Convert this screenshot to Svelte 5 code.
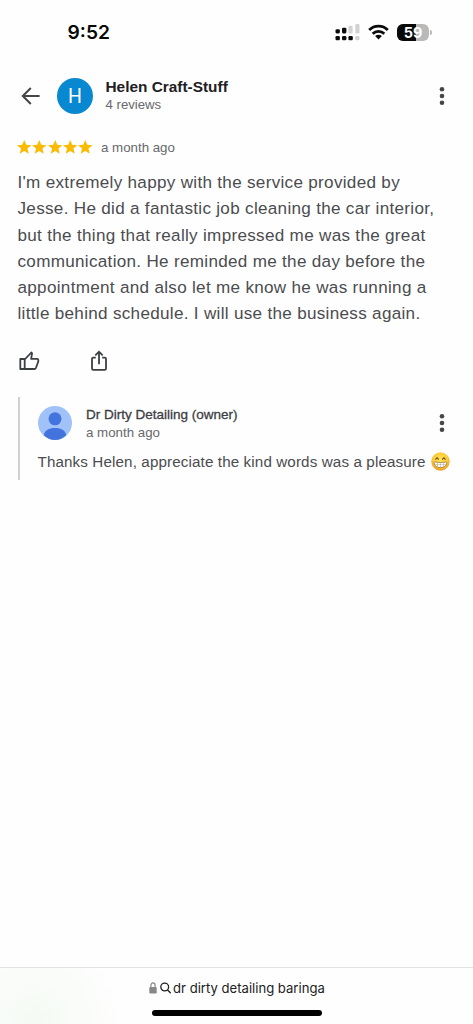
<script lang="ts">
	const time = '9:52';
	const battery = 59;
	const review = {
		author: 'Helen Craft-Stuff',
		count: '4 reviews',
		date: 'a month ago',
		stars: 5,
		lines: [
			"I'm extremely happy with the service provided by",
			'Jesse. He did a fantastic job cleaning the car interior,',
			'but the thing that really impressed me was the great',
			'communication. He reminded me the day before the',
			'appointment and also let me know he was running a',
			'little behind schedule. I will use the business again.'
		]
	};
	const reply = {
		author: 'Dr Dirty Detailing (owner)',
		date: 'a month ago',
		text: 'Thanks Helen, appreciate the kind words was a pleasure'
	};
	const query = 'dr dirty detailing baringa';
</script>

{#snippet dots()}
	<button class="more" aria-label="More">
		<svg width="6" height="20" viewBox="0 0 6 20" fill="#444649">
			<circle cx="3" cy="3.3" r="2.3" />
			<circle cx="3" cy="10" r="2.3" />
			<circle cx="3" cy="16.7" r="2.3" />
		</svg>
	</button>
{/snippet}

<div class="screen">
	<div class="status">
		<span class="time">{time}</span>
		<div class="indicators">
			<svg class="signal" width="25" height="17" viewBox="0 0 25 17">
				<g fill="#0b0b0b">
					<rect x="0.5" y="5.2" width="4.4" height="4.2" rx="1.3" />
					<rect x="7" y="3.8" width="4.4" height="5.6" rx="1.3" />
					<rect x="0.5" y="12" width="4.4" height="4.2" rx="1.3" />
					<rect x="7" y="12" width="4.4" height="4.2" rx="1.3" />
					<rect x="13.4" y="12" width="4.4" height="4.2" rx="1.3" />
				</g>
				<g fill="#d2d2d2">
					<rect x="13.4" y="1.8" width="4.2" height="7.8" rx="1.3" />
					<rect x="20.3" y="0" width="4.2" height="9.6" rx="1.3" />
					<rect x="20.3" y="12" width="4.2" height="4.2" rx="1.3" />
				</g>
			</svg>
			<svg class="wifi" width="21" height="16" viewBox="0 0 21 16">
				<g fill="none" stroke="#0b0b0b" stroke-width="2.8">
					<path d="M1.2 6A13.2 13.2 0 0 1 19.8 6" />
					<path d="M4.7 9.7A8.2 8.2 0 0 1 16.3 9.7" />
				</g>
				<path d="M7.1 12.1a4.9 4.9 0 0 1 6.8 0L10.5 15.6z" fill="#0b0b0b" />
			</svg>
			<div class="battery">
				<div class="level" style="width: {battery}%"></div>
				<span>{battery}</span>
			</div>
			<i class="cap"></i>
		</div>
	</div>

	<header>
		<svg class="back" width="20" height="18" viewBox="0 0 20 18" fill="none" stroke="#444649" stroke-width="2">
			<path d="M18.6 9H2M9.8 1L1.8 9l8 8" />
		</svg>
		<div class="avatar">H</div>
		<div class="who">
			<strong>{review.author}</strong>
			<span>{review.count}</span>
		</div>
		{@render dots()}
	</header>

	<div class="rating">
		{#each Array(review.stars) as _}
			<svg width="14.5" height="14" viewBox="0 0 24 23" fill="#fabb05">
				<path d="M12 0l3.3 7.8 8.7.7-6.7 5.6 2.1 8.7L12 18.200l-7.4 4.6 2.1-8.700L0 8.500l8.700-.7z" />
			</svg>
		{/each}
		<span>{review.date}</span>
	</div>

	<p class="review">
		{#each review.lines as line}
			<span>{line}</span>
		{/each}
	</p>

	<div class="actions">
		<svg width="21" height="20" viewBox="0 0 21 20" fill="none" stroke="#3c4043" stroke-width="1.8" stroke-linejoin="round">
			<path d="M1.3 8h4.400v10H1.300zM5.700 8.500L12.300 1.500l.8.8-1 5.500h6.200q1 0 1 1.200v1.500L16.900 17q-.4 1-1.500 1h-9.700" />
		</svg>
		<svg width="16" height="22" viewBox="0 0 16 22" fill="none" stroke="#3c4043" stroke-width="1.8">
			<path d="M4.800 7.600H2.300q-1.300 0-1.300 1.300V18.500q0 1.300 1.300 1.300H13.700q1.300 0 1.300-1.300V8.900q0-1.300-1.300-1.300H11.200M8 14.200V2.200M4.300 5.300L8 1.700l3.700 3.600" />
		</svg>
	</div>

	<section class="reply">
		<div class="reply-head">
			<svg class="owner" width="34" height="34" viewBox="0 0 34 34">
				<circle cx="17" cy="17" r="17" fill="#a0c2f9" />
				<circle cx="17" cy="12.8" r="6.5" fill="#4374de" />
				<path d="M5.800 29.200C6.500 24 11 22 17 22s10.500 2 11.200 7.200A17 17 0 0 1 17 34a17 17 0 0 1-11.200-4.800z" fill="#4374de" />
			</svg>
			<div class="who">
				<strong>{reply.author}</strong>
				<span>{reply.date}</span>
			</div>
			{@render dots()}
		</div>
		<div class="reply-text">
			<span>{reply.text}</span>
			<svg width="19" height="19" viewBox="0 0 19 19">
				<defs>
					<radialGradient id="face" cx="50%" cy="40%" r="60%">
						<stop offset="0" stop-color="#ffe45c" />
						<stop offset=".65" stop-color="#fccb3a" />
						<stop offset="1" stop-color="#e79a22" />
					</radialGradient>
				</defs>
				<circle cx="9.5" cy="9.5" r="9.2" fill="url(#face)" />
				<path d="M4.800 7.200q1.200-2.600 2.600 0M11.600 7.200q1.200-2.600 2.600 0" fill="none" stroke="#64401a" stroke-width="1.1" stroke-linecap="round" />
				<path d="M3.800 10q5.700 1 11.400 0 .8 0 .7 1-.9 4.600-6.400 4.600T3.100 11q-.1-1 .7-1z" fill="#fff" stroke="#986326" stroke-width=".7" />
				<path d="M3.500 12.600h12M6.500 10.500v4.300M9.500 10.700v4.700M12.500 10.500v4.300" stroke="#b59b7a" stroke-width=".5" />
			</svg>
		</div>
	</section>

	<footer>
		<div class="address">
			<svg width="8" height="12" viewBox="0 0 8 12">
				<path d="M1.900 5.500V3.300a2.100 2.500 0 0 1 4.200 0v2.200" fill="none" stroke="#87878a" stroke-width="1.2" />
				<rect x=".3" y="5" width="7.4" height="6.5" rx="1.2" fill="#87878a" />
			</svg>
			<svg class="search" width="11" height="12" viewBox="0 0 11 12" fill="none" stroke="#222" stroke-width="1.3" stroke-linecap="round">
				<circle cx="4.7" cy="5" r="3.9" />
				<path d="M7.600 8l2.700 2.800" />
			</svg>
			<span>{query}</span>
		</div>
		<div class="home"></div>
	</footer>
</div>

<style>
	:global(body) {
		margin: 0;
		background: #fefefe;
	}
	.screen {
		width: 473px;
		height: 1024px;
		display: flex;
		flex-direction: column;
		overflow: hidden;
		background: #fefefe;
		color: #4b4c4f;
		font-family: "Liberation Sans", Arial, sans-serif;
		white-space: nowrap;
	}
	.status {
		height: 64px;
		padding: 0 41px 0 67.5px;
		display: flex;
		align-items: center;
		justify-content: space-between;
	}
	.time {
		font: 600 19.2px/24px Inter, sans-serif;
		color: #080808;
	}
	.indicators {
		display: flex;
		align-items: center;
	}
	.wifi {
		margin: 0 8px 0 8px;
	}
	.battery {
		position: relative;
		width: 32px;
		height: 17px;
		border-radius: 6px;
		overflow: hidden;
		background: #b9b9b9;
		display: flex;
		justify-content: center;
	}
	.level {
		position: absolute;
		left: 0;
		top: 0;
		height: 100%;
		background: #090909;
	}
	.battery span {
		position: relative;
		font: 700 14.5px/17px Inter, sans-serif;
		color: #fff;
	}
	.cap {
		width: 2px;
		height: 5px;
		margin-left: 1px;
		border-radius: 0 2px 2px 0;
		background: #b9b9b9;
	}
	header {
		height: 36px;
		margin-top: 13.5px;
		padding: 0 28px 0 21px;
		display: flex;
		align-items: center;
	}
	.back {
		margin-right: 16px;
	}
	.avatar {
		width: 36px;
		height: 36px;
		border-radius: 50%;
		background: #0788d1;
		color: #fff;
		font: 19.5px/37px Roboto, sans-serif;
		text-align: center;
	}
	.who {
		flex: 1;
		display: flex;
		flex-direction: column;
		font-size: 13.2px;
		line-height: 17px;
		color: #67696c;
	}
	header .who {
		margin-left: 12.5px;
	}
	header strong {
		font-size: 15.4px;
		line-height: 18px;
		color: #1f2023;
	}
	.more {
		width: 6px;
		height: 20px;
		padding: 0;
		border: 0;
		background: none;
	}
	.more svg {
		display: block;
	}
	.rating {
		height: 18px;
		margin: 24.5px 0 0 17px;
		display: flex;
		align-items: center;
		gap: 0.8px;
		font-size: 13.3px;
		color: #67696c;
	}
	.rating span {
		margin-left: 7.5px;
	}
	.review {
		margin: 14px 0 0 17.5px;
		font-size: 17.1px;
		line-height: 26.3px;
		letter-spacing: 0.3px;
	}
	.review span {
		display: block;
	}
	.actions {
		height: 22px;
		margin: 22px 0 0 18.5px;
		display: flex;
		align-items: center;
		gap: 51.5px;
	}
	.reply {
		height: 83px;
		margin: 25px 0 0 17.5px;
		padding-right: 28px;
		box-sizing: border-box;
		border-left: 2px solid #d2d2d3;
	}
	.reply-head {
		padding: 9px 0 0 18.5px;
		display: flex;
		align-items: center;
	}
	.reply .who {
		margin-left: 14px;
	}
	.reply .who span {
		font-size: 13.3px;
		line-height: 17px;
	}
	.reply strong {
		font-size: 13.5px;
		font-weight: 500;
		line-height: 18px;
		color: #3c4043;
		-webkit-text-stroke: 0.3px #3c4043;
	}
	.reply-text {
		margin: 10.5px -8px 0 18px;
		display: flex;
		align-items: center;
		gap: 5px;
		font-size: 15.2px;
		line-height: 21px;
		letter-spacing: 0.12px;
	}
	.reply-text svg {
		flex-shrink: 0;
	}
	footer {
		height: 57px;
		margin-top: auto;
		box-sizing: border-box;
		border-top: 1px solid #e2e2e2;
		background: radial-gradient(ellipse 90px 90px at 35px 50px, #f5faf4, #fefefe);
	}
	.address {
		height: 18px;
		margin: 11px 0 0 149px;
		display: flex;
		align-items: center;
		font: 13.1px/18px Inter, sans-serif;
		color: #202124;
	}
	.search {
		margin: 0 2px 0 3px;
	}
	.home {
		width: 170px;
		height: 6px;
		margin: 12.5px auto 0;
		border-radius: 3px;
		background: #000;
	}
</style>
